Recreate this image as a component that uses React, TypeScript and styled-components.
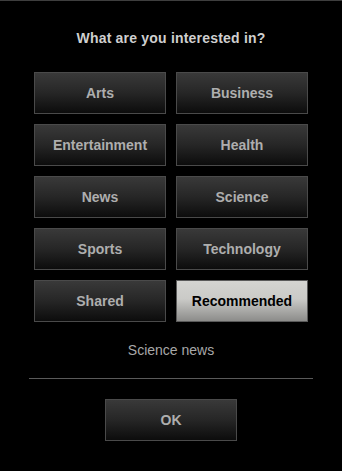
import React, { useState } from 'react'
import styled, { createGlobalStyle } from 'styled-components'

const topics = [
  'Arts', 'Business',
  'Entertainment', 'Health',
  'News', 'Science',
  'Sports', 'Technology',
  'Shared', 'Recommended'
]

const GlobalStyle = createGlobalStyle`
  html, body {
    margin: 0;
    padding: 0;
    background: #000;
  }
  body {
    font-family: "Liberation Sans", Arial, sans-serif;
  }
`

export default function App() {
  const [selected] = useState('Recommended')

  return (
    <>
      <GlobalStyle />
      <Dialog>
        <Title>What are you interested in?</Title>
        <TopicGrid>
          {topics.map((t) => (
            <TopicBtn key={t} active={t === selected}>{t}</TopicBtn>
          ))}
        </TopicGrid>
        <Caption>Science news</Caption>
        <Divider />
        <OkBtn>OK</OkBtn>
      </Dialog>
    </>
  )
}

const Dialog = styled.div`
  width: 342px;
  height: 471px;
  box-sizing: border-box;
  border-top: 1px solid #3e3e3e;
  display: flex;
  flex-direction: column;
  align-items: center;
  padding-top: 27px;
`

const Title = styled.div`
  font-size: 14px;
  line-height: 20px;
  font-weight: bold;
  color: #cfcfcf;
  letter-spacing: 0.2px;
`

const TopicGrid = styled.div`
  margin-top: 24px;
  display: grid;
  grid-template-columns: 132px 132px;
  grid-auto-rows: 42px;
  gap: 10px;
`

const TopicBtn = styled.button<{ active?: boolean }>`
  box-sizing: border-box;
  width: 132px;
  height: 42px;
  margin: 0;
  padding: 0;
  border: 1px solid ${(p) => (p.active ? '#5a5a5a' : '#4a4a4a')};
  background: ${(p) =>
    p.active
      ? 'linear-gradient(to bottom, #d4d4d1 0%, #cacac7 45%, #8c8c8a 100%)'
      : 'linear-gradient(to bottom, #393939 0%, #262626 50%, #0c0c0c 100%)'};
  color: ${(p) => (p.active ? '#000' : '#aeaeae')};
  font-family: "Liberation Sans", Arial, sans-serif;
  font-size: 14px;
  font-weight: bold;
  display: flex;
  align-items: center;
  justify-content: center;
  :focus {
    outline: none;
  }
`

const Caption = styled.div`
  margin-top: 18px;
  font-size: 14px;
  line-height: 20px;
  color: #a8a8a8;
`

const Divider = styled.div`
  margin-top: 18px;
  width: 284px;
  height: 1px;
  background: #5a5a5a;
`

const OkBtn = styled(TopicBtn)`
  margin-top: 20px;
`
